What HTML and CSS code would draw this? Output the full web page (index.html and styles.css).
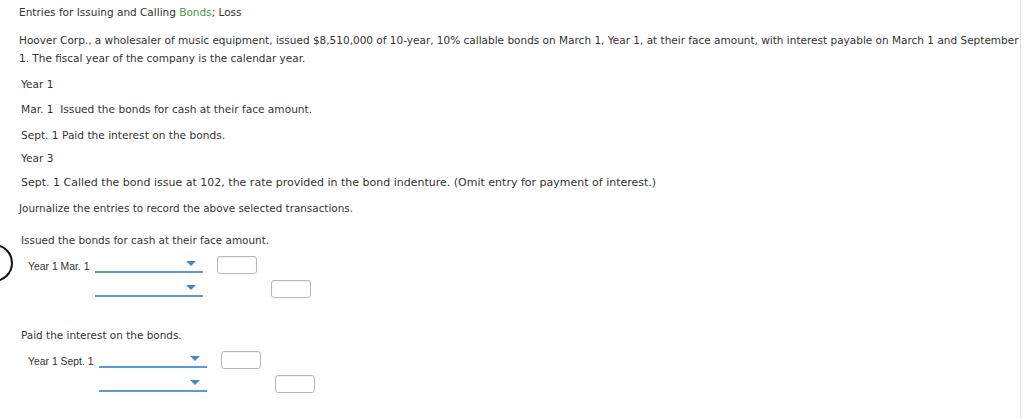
FILE: index.html
```html
<!DOCTYPE html>
<html>
<head>
<meta charset="utf-8">
<link rel="stylesheet" href="styles.css">
</head>
<body>
<div class="page">
  <div class="title">Entries for Issuing and Calling <span class="term">Bonds</span>; Loss</div>
  <p class="intro">Hoover Corp., a wholesaler of music equipment, issued $8,510,000 of 10-year, 10% callable bonds on March 1, Year 1, at their face amount, with interest payable on March 1 and September 1. The fiscal year of the company is the calendar year.</p>
  <div class="item yr">Year 1</div>
  <div class="item">Mar. 1&nbsp; Issued the bonds for cash at their face amount.</div>
  <div class="item sept">Sept. 1 Paid the interest on the bonds.</div>
  <div class="item yr3">Year 3</div>
  <div class="item called">Sept. 1 Called the bond issue at 102, the rate provided in the bond indenture. (Omit entry for payment of interest.)</div>
  <div class="instr">Journalize the entries to record the above selected transactions.</div>

  <section class="entry first">
    <div class="entry-title">Issued the bonds for cash at their face amount.</div>
    <div class="journal">
      <div class="date">Year 1 Mar. 1</div>
      <div class="select"><span class="caret"></span></div>
      <div class="box"></div>
      <div></div>
      <div></div>
      <div class="select"><span class="caret"></span></div>
      <div></div>
      <div class="box"></div>
    </div>
    <span class="marker"></span>
  </section>

  <section class="entry second">
    <div class="entry-title">Paid the interest on the bonds.</div>
    <div class="journal">
      <div class="date">Year 1 Sept. 1</div>
      <div class="select"><span class="caret"></span></div>
      <div class="box"></div>
      <div></div>
      <div></div>
      <div class="select"><span class="caret"></span></div>
      <div></div>
      <div class="box"></div>
    </div>
  </section>
</div>
</body>
</html>
```

FILE: styles.css
```css
html, body {
  margin: 0;
  padding: 0;
  background: #fff;
}
body {
  font-family: "DejaVu Sans", Verdana, sans-serif;
  font-size: 10.6px;
  line-height: 18px;
  color: #333;
  overflow: hidden;
}
.page {
  width: 1021px;
  height: 419px;
  padding: 3px 0 0 19px;
  box-sizing: border-box;
  border-right: 1px solid #e2e2e2;
  position: relative;
}
.title {
  margin: 0;
  font-size: 10.5px;
}
.term {
  color: #4a9a4a;
}
.intro {
  margin: 10px -4px 0 0;
  font-size: 10.5px;
}
.item {
  margin: 7px 0 0 2px;
}
.called {
  font-size: 11px;
}
.yr {
  margin-top: 8px;
}
.sept {
  margin-top: 8px;
}
.yr3 {
  margin-top: 5px;
}
.instr {
  margin-top: 7px;
  font-size: 10.4px;
}
.entry {
  position: relative;
  margin-left: 2px;
}
.entry-title {
  font-size: 10.45px;
}
.entry.first {
  margin-top: 14px;
}
.entry.second {
  margin-top: 28px;
}
.journal {
  display: grid;
  grid-template-columns: auto 108px 40px 40px;
  justify-content: start;
  grid-auto-rows: 18px;
  column-gap: 14px;
  row-gap: 6px;
  margin: 7px 0 0 7px;
  align-items: center;
}
.second .journal {
  margin-top: 7px;
}
.date {
  font-family: "Liberation Sans", Arial, sans-serif;
  font-size: 10.4px;
  margin-right: -8px;
  line-height: 18px;
  padding-top: 2px;
  align-self: start;
}
.select {
  height: 15px;
  border-bottom: 2px solid #5b9bd1;
  position: relative;
  align-self: start;
}
.caret {
  position: absolute;
  right: 7px;
  top: 5px;
  width: 0;
  height: 0;
  border-left: 5.5px solid transparent;
  border-right: 5.5px solid transparent;
  border-top: 5px solid #3f8ccc;
}
.box {
  width: 40px;
  height: 18px;
  box-sizing: border-box;
  border: 1px solid #b9b9b9;
  border-radius: 3px;
  box-shadow: inset 0 1px 1px rgba(0,0,0,0.06);
}
.marker {
  position: absolute;
  left: -46px;
  top: 13px;
  width: 34px;
  height: 34px;
  border: 2px solid #111;
  border-radius: 50%;
}
```
